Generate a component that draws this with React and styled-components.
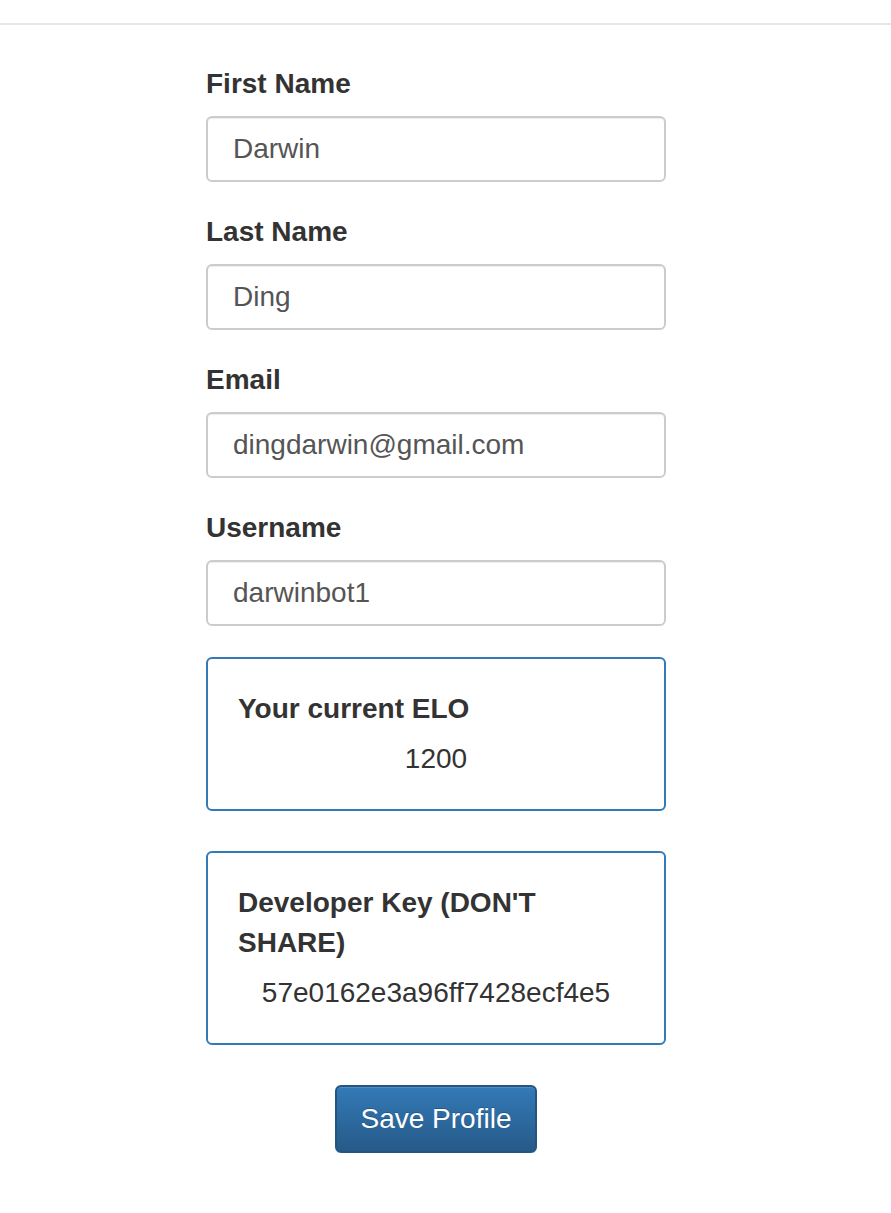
import React from "react";
import styled, { createGlobalStyle } from "styled-components";

const Global = createGlobalStyle`
  html, body { margin: 0; padding: 0; background: #fff; }
  body { font-family: "Liberation Sans", Arial, sans-serif; color: #333; }
  * { box-sizing: border-box; }
`;

const Navbar = styled.div`
  height: 25px;
  border-bottom: 2px solid #e7e7e7;
  background: #fff;
`;

const Form = styled.form`
  width: 460px;
  margin: 41px 0 0 206px;
  display: flex;
  flex-direction: column;
`;

const Group = styled.div`
  display: flex;
  flex-direction: column;
  margin-bottom: ${(p) => (p.$last ? "31px" : "32px")};
`;

const Label = styled.label`
  display: block;
  font-size: 28px;
  font-weight: bold;
  line-height: 36px;
  color: #333;
  margin-bottom: 14px;
`;

const Input = styled.input`
  display: block;
  height: 66px;
  width: 100%;
  margin: 0;
  border: 2px solid #ccc;
  border-radius: 6px;
  padding: 0 25px;
  font-family: "Liberation Sans", Arial, sans-serif;
  font-size: 28px;
  color: #555;
  box-shadow: inset 0 1px 1px rgba(0, 0, 0, 0.075);
  outline: none;
`;

const Panel = styled.div`
  border: 2px solid #337ab7;
  border-radius: 6px;
  padding: 30px 30px 32px;
  margin-bottom: 40px;
`;

const PanelTitle = styled.h4`
  margin: 0 0 12px;
  font-size: 28px;
  font-weight: bold;
  line-height: 40px;
  color: #333;
`;

const PanelValue = styled.div`
  font-size: 28px;
  line-height: 36px;
  text-align: center;
  color: #333;
`;

const Actions = styled.div`
  display: flex;
  justify-content: center;
`;

const Button = styled.button`
  height: 68px;
  padding: 0 24px;
  font-family: "Liberation Sans", Arial, sans-serif;
  font-size: 28px;
  color: #fff;
  border: 2px solid #245580;
  border-radius: 6px;
  background: linear-gradient(to bottom, #337ab7 0%, #265a88 100%);
  text-shadow: 0 -1px 0 rgba(0, 0, 0, 0.2);
  box-shadow: inset 0 1px 0 rgba(255, 255, 255, 0.15), 0 1px 1px rgba(0, 0, 0, 0.075);
  cursor: pointer;
`;

const fields = [
  { label: "First Name", value: "Darwin" },
  { label: "Last Name", value: "Ding" },
  { label: "Email", value: "dingdarwin@gmail.com" },
  { label: "Username", value: "darwinbot1" },
];

export default function App() {
  return (
    <>
      <Global />
      <Navbar />
      <Form onSubmit={(e) => e.preventDefault()}>
        {fields.map((f, i) => (
          <Group key={f.label} $last={i === fields.length - 1}>
            <Label>{f.label}</Label>
            <Input defaultValue={f.value} />
          </Group>
        ))}
        <Panel>
          <PanelTitle>Your current ELO</PanelTitle>
          <PanelValue>1200</PanelValue>
        </Panel>
        <Panel>
          <PanelTitle>Developer Key (DON'T SHARE)</PanelTitle>
          <PanelValue>57e0162e3a96ff7428ecf4e5</PanelValue>
        </Panel>
        <Actions>
          <Button type="submit">Save Profile</Button>
        </Actions>
      </Form>
    </>
  );
}
